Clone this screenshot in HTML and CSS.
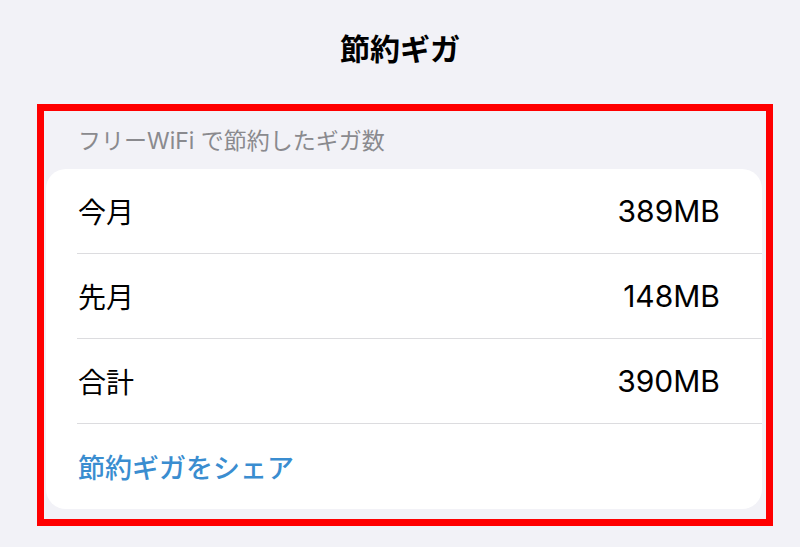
FILE: index.html
```html
<!DOCTYPE html>
<html lang="ja">
<head>
  <meta charset="utf-8">
  <title>節約ギガ</title>
  <link rel="stylesheet" href="styles.css">
</head>
<body>
  <h1 class="nav-title">節約ギガ</h1>

  <div class="highlight">
    <p class="section-header">フリーWiFi で節約したギガ数</p>
    <div class="card">
      <div class="row">
        <span class="label">今月</span>
        <span class="value">389MB</span>
      </div>
      <div class="row">
        <span class="label">先月</span>
        <span class="value">148MB</span>
      </div>
      <div class="row">
        <span class="label">合計</span>
        <span class="value">390MB</span>
      </div>
      <div class="row">
        <a class="share" href="#">節約ギガをシェア</a>
      </div>
    </div>
  </div>
</body>
</html>
```

FILE: styles.css
```css
html {
  background: #f2f2f7;
}

body {
  margin: 0;
  width: 800px;
  height: 547px;
  overflow: hidden;
  font-family: Inter, "Noto Sans CJK JP", sans-serif;
  color: #000;
}

.nav-title {
  margin: 0;
  padding-top: 28px;
  height: 104px;
  box-sizing: border-box;
  text-align: center;
  font-size: 30px;
  line-height: 42px;
  font-weight: 700;
}

.highlight {
  margin-left: 37px;
  width: 736px;
  height: 422px;
  box-sizing: border-box;
  border: 7px solid #ff0000;
}

.section-header {
  margin: 0;
  padding: 15px 0 0 34px;
  height: 58px;
  box-sizing: border-box;
  font-size: 23px;
  line-height: 30px;
  color: #8a8a8e;
}

.card {
  margin-left: 2px;
  width: 716px;
  background: #fff;
  border-radius: 20px;
}

.row {
  display: flex;
  align-items: center;
  justify-content: space-between;
  height: 85px;
  margin-left: 31px;
  padding: 0 42px 0 1px;
  border-bottom: 1.5px solid #dcdcdf;
  box-sizing: border-box;
  font-size: 27px;
}

.row:last-child {
  border-bottom: none;
}

.label {
  font-size: 28px;
}

.value {
  font-size: 30px;
}

.share {
  color: #3a8dd0;
  text-decoration: none;
  font-weight: 500;
}
```
